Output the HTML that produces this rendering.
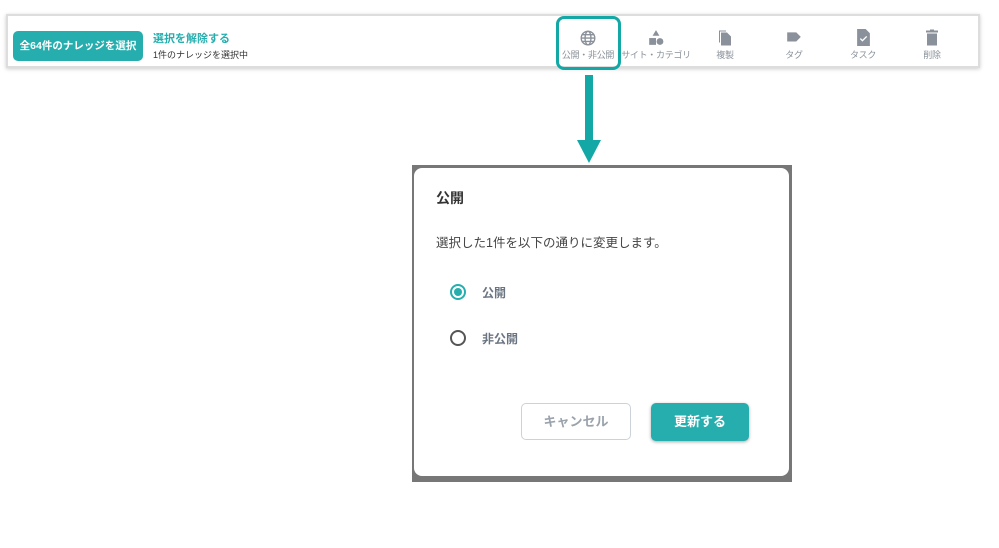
<!DOCTYPE html><html><head><meta charset="utf-8"><style>
body{margin:0;width:999px;height:548px;background:#fff;position:relative;overflow:hidden;font-family:"Liberation Sans","Noto Sans CJK JP",sans-serif}
.tb{position:absolute;left:8px;top:16px;width:970px;height:50px;background:#fff;box-shadow:0 0 0 2px #ddd,0 1px 4px 2px #ccc}
.btn{position:absolute;left:13px;top:31px;width:130px;height:30px;background:#26aeae;border-radius:5px;color:#fff;font-size:10.5px;font-weight:bold;line-height:30px;text-align:center;white-space:nowrap}
.t1{position:absolute;left:153px;top:30px;font-size:11px;color:#26aeae;font-weight:bold}
.t2{position:absolute;left:153px;top:48px;font-size:9px;color:#333}
.it{position:absolute;top:29px;width:70px;text-align:center;font-size:9px;color:#8a919a;white-space:nowrap;letter-spacing:-0.3px}
.it svg{display:block;margin:0 auto 2px;height:17px}
.hl{position:absolute;left:556px;top:16px;width:59px;height:48px;border:3px solid #13a8a5;border-radius:8px}
.line{position:absolute;left:585px;top:75px;width:8px;height:66px;background:#13a8a5}
.tri{position:absolute;left:577px;top:140px;border-left:12px solid transparent;border-right:12px solid transparent;border-top:23px solid #13a8a5}
.ov{position:absolute;left:412px;top:165px;width:380px;height:317px;background:#777}
.dlg{position:absolute;left:414px;top:168px;width:375px;height:308px;background:#fff;border-radius:8px}
.rad{position:absolute;width:16px;height:16px;border-radius:50%;box-sizing:border-box}
</style></head><body>
<div class="tb"></div>
<div class="btn">全64件のナレッジを選択</div>
<div class="t1">選択を解除する</div>
<div class="t2">1件のナレッジを選択中</div>
<div class="it" style="left:553px"><svg width="16" height="17" viewBox="0 -1 14 15"><g fill="none" stroke="#8a919a" stroke-width="1.2"><circle cx="7" cy="7" r="6"/><ellipse cx="7" cy="7" rx="2.6" ry="6"/><path d="M1 7h12M2 4h10M2 10h10"/></g></svg>公開・非公開</div>
<div class="it" style="left:621px"><svg width="16" height="17" viewBox="0 -1 14 15" fill="#8a919a"><path d="M7 0L10 5H4z"/><rect x="1" y="7" width="6" height="6"/><circle cx="10.5" cy="10" r="3"/></svg>サイト・カテゴリ</div>
<div class="it" style="left:690px"><svg width="14" height="17" viewBox="0 0 14 16" fill="#8a919a"><path d="M1 1h7v1H2v11H1z"/><path d="M3 3h6l4 4v9H3z"/></svg>複製</div>
<div class="it" style="left:759px"><svg width="16" height="17" viewBox="0 0 14 15" fill="#8a919a"><path d="M1 3h8l4 4-4 4H1z"/></svg>タグ</div>
<div class="it" style="left:828px"><svg width="13" height="17" viewBox="0 0 12 16" fill="#8a919a"><path d="M0 0h8l4 4v12H0z"/><path d="M3 9l2 2 4-4" stroke="#fff" stroke-width="1.3" fill="none"/></svg>タスク</div>
<div class="it" style="left:897px"><svg width="12" height="17" viewBox="0 0 12 16" fill="#8a919a"><rect x="0" y="1" width="12" height="2"/><rect x="4" y="0" width="4" height="2"/><path d="M1 4h10v12H1z"/></svg>削除</div>
<div class="hl"></div>
<div class="line"></div><div class="tri"></div>
<div class="ov"></div>
<div class="dlg">
<div style="position:absolute;left:22px;top:20px;font-size:14px;font-weight:bold;color:#333">公開</div>
<div style="position:absolute;left:22px;top:64px;font-size:12.5px;color:#444">選択した1件を以下の通りに変更します。</div>
<div class="rad" style="left:36px;top:116px;border:2px solid #26aeae"><div style="position:absolute;left:2px;top:2px;width:8px;height:8px;border-radius:50%;background:#26aeae"></div></div>
<div style="position:absolute;left:68px;top:116px;font-size:12px;font-weight:bold;color:#6b7582">公開</div>
<div class="rad" style="left:36px;top:162px;border:2px solid #555"></div>
<div style="position:absolute;left:68px;top:162px;font-size:12px;font-weight:bold;color:#6b7582">非公開</div>
<div style="position:absolute;left:107px;top:235px;width:110px;height:37px;border:1px solid #ccd2da;border-radius:5px;box-sizing:border-box;text-align:center;line-height:35px;font-size:13px;font-weight:bold;color:#9aa2ac">キャンセル</div>
<div style="position:absolute;left:237px;top:235px;width:98px;height:38px;background:#26aeae;border-radius:5px;text-align:center;line-height:38px;font-size:13px;font-weight:bold;color:#fff;box-shadow:0 1px 3px #aaa">更新する</div>
</div>
</body></html>
